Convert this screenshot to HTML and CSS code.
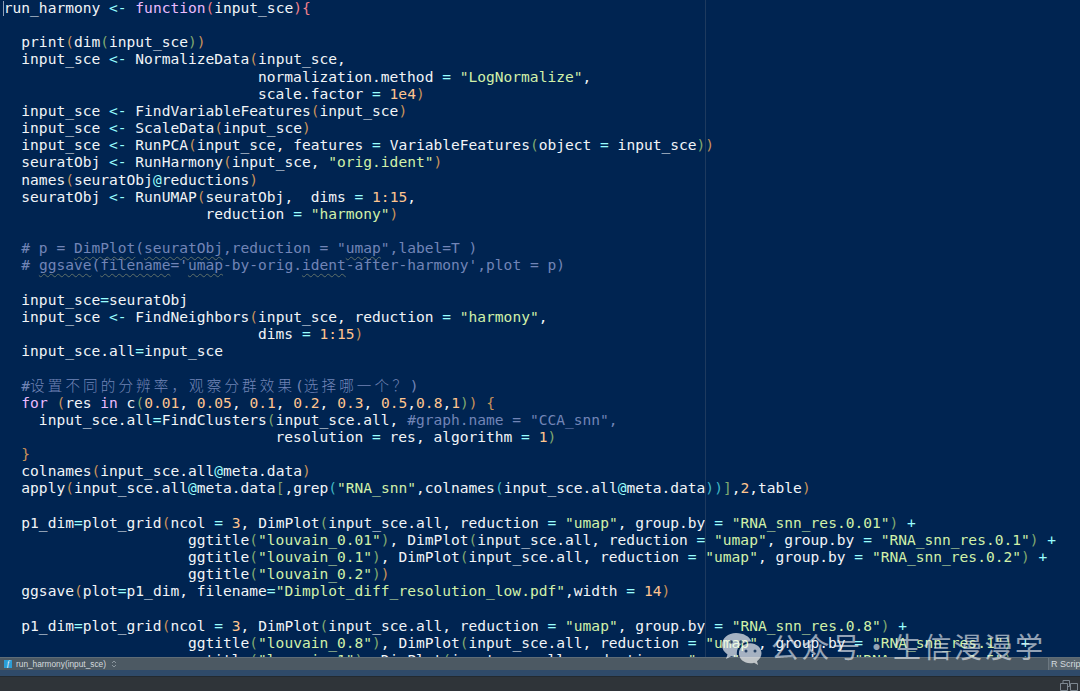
FILE: index.html
```html
<!DOCTYPE html>
<html lang="en">
<head>
<meta charset="utf-8">
<title>run_harmony</title>
<link rel="stylesheet" href="styles.css">
</head>
<body>
<div class="app">
<main class="editor">
<div class="code">
<div class="ln"><span class="caret"></span>run_harmony <i class="o">&lt;-</i> <i class="k">function</i><i class="r">(</i>input_sce<i class="r">){</i></div>
<div class="ln"> </div>
<div class="ln">  print<i class="p0">(</i>dim<i class="p1">(</i>input_sce<i class="p1">)</i><i class="p0">)</i></div>
<div class="ln">  input_sce <i class="o">&lt;-</i> NormalizeData<i class="p0">(</i>input_sce,</div>
<div class="ln">                             normalization.method <i class="o">=</i> <i class="s">"LogNormalize"</i>,</div>
<div class="ln">                             scale.factor <i class="o">=</i> <i class="n">1e4</i><i class="p0">)</i></div>
<div class="ln">  input_sce <i class="o">&lt;-</i> FindVariableFeatures<i class="p0">(</i>input_sce<i class="p0">)</i></div>
<div class="ln">  input_sce <i class="o">&lt;-</i> ScaleData<i class="p0">(</i>input_sce<i class="p0">)</i></div>
<div class="ln">  input_sce <i class="o">&lt;-</i> RunPCA<i class="p0">(</i>input_sce, features <i class="o">=</i> VariableFeatures<i class="p1">(</i>object <i class="o">=</i> input_sce<i class="p1">)</i><i class="p0">)</i></div>
<div class="ln">  seuratObj <i class="o">&lt;-</i> RunHarmony<i class="p0">(</i>input_sce, <i class="s">"orig.ident"</i><i class="p0">)</i></div>
<div class="ln">  names<i class="p0">(</i>seuratObj<i class="o">@</i>reductions<i class="p0">)</i></div>
<div class="ln">  seuratObj <i class="o">&lt;-</i> RunUMAP<i class="p0">(</i>seuratObj,  dims <i class="o">=</i> <i class="n">1:15</i>,</div>
<div class="ln">                       reduction <i class="o">=</i> <i class="s">"harmony"</i><i class="p0">)</i></div>
<div class="ln"> </div>
<div class="ln c">  # p = <u>DimPlot</u>(<u>seuratObj</u>,reduction = "<u>umap</u>",label=T )</div>
<div class="ln c">  # <u>ggsave</u>(<u>filename</u>='<u>umap</u>-by-orig.<u>ident</u>-after-harmony',plot = p)</div>
<div class="ln"> </div>
<div class="ln">  input_sce<i class="o">=</i>seuratObj</div>
<div class="ln">  input_sce <i class="o">&lt;-</i> FindNeighbors<i class="p0">(</i>input_sce, reduction <i class="o">=</i> <i class="s">"harmony"</i>,</div>
<div class="ln">                             dims <i class="o">=</i> <i class="n">1:15</i><i class="p0">)</i></div>
<div class="ln">  input_sce.all<i class="o">=</i>input_sce</div>
<div class="ln"> </div>
<div class="ln c">  #<span class="cjk">设置不同的分辨率，观察分群效果</span>(<span class="cjk">选择哪一个？</span>)</div>
<div class="ln">  <i class="k">for</i> <i class="p0">(</i>res <i class="k">in</i> c<i class="p1">(</i><i class="n">0.01</i>, <i class="n">0.05</i>, <i class="n">0.1</i>, <i class="n">0.2</i>, <i class="n">0.3</i>, <i class="n">0.5</i>,<i class="n">0.8</i>,<i class="n">1</i><i class="p1">)</i><i class="p0">)</i> <i class="p0">{</i></div>
<div class="ln">    input_sce.all<i class="o">=</i>FindClusters<i class="p1">(</i>input_sce.all, <i class="c">#graph.name = "CCA_snn",</i></div>
<div class="ln">                               resolution <i class="o">=</i> res, algorithm <i class="o">=</i> <i class="n">1</i><i class="p1">)</i></div>
<div class="ln">  <i class="p0">}</i></div>
<div class="ln">  colnames<i class="p0">(</i>input_sce.all<i class="o">@</i>meta.data<i class="p0">)</i></div>
<div class="ln">  apply<i class="p0">(</i>input_sce.all<i class="o">@</i>meta.data<i class="p1">[</i>,grep<i class="p2">(</i><i class="s">"RNA_snn"</i>,colnames<i class="p2">(</i>input_sce.all<i class="o">@</i>meta.data<i class="p2">)</i><i class="p2">)</i><i class="p1">]</i>,<i class="n">2</i>,table<i class="p0">)</i></div>
<div class="ln"> </div>
<div class="ln">  p1_dim<i class="o">=</i>plot_grid<i class="p0">(</i>ncol <i class="o">=</i> <i class="n">3</i>, DimPlot<i class="p1">(</i>input_sce.all, reduction <i class="o">=</i> <i class="s">"umap"</i>, group.by <i class="o">=</i> <i class="s">"RNA_snn_res.0.01"</i><i class="p1">)</i> <i class="o">+</i></div>
<div class="ln">                     ggtitle<i class="p1">(</i><i class="s">"louvain_0.01"</i><i class="p1">)</i>, DimPlot<i class="p1">(</i>input_sce.all, reduction <i class="o">=</i> <i class="s">"umap"</i>, group.by <i class="o">=</i> <i class="s">"RNA_snn_res.0.1"</i><i class="p1">)</i> <i class="o">+</i></div>
<div class="ln">                     ggtitle<i class="p1">(</i><i class="s">"louvain_0.1"</i><i class="p1">)</i>, DimPlot<i class="p1">(</i>input_sce.all, reduction <i class="o">=</i> <i class="s">"umap"</i>, group.by <i class="o">=</i> <i class="s">"RNA_snn_res.0.2"</i><i class="p1">)</i> <i class="o">+</i></div>
<div class="ln">                     ggtitle<i class="p1">(</i><i class="s">"louvain_0.2"</i><i class="p1">)</i><i class="p0">)</i></div>
<div class="ln">  ggsave<i class="p0">(</i>plot<i class="o">=</i>p1_dim, filename<i class="o">=</i><i class="s">"Dimplot_diff_resolution_low.pdf"</i>,width <i class="o">=</i> <i class="n">14</i><i class="p0">)</i></div>
<div class="ln"> </div>
<div class="ln">  p1_dim<i class="o">=</i>plot_grid<i class="p0">(</i>ncol <i class="o">=</i> <i class="n">3</i>, DimPlot<i class="p1">(</i>input_sce.all, reduction <i class="o">=</i> <i class="s">"umap"</i>, group.by <i class="o">=</i> <i class="s">"RNA_snn_res.0.8"</i><i class="p1">)</i> <i class="o">+</i></div>
<div class="ln">                     ggtitle<i class="p1">(</i><i class="s">"louvain_0.8"</i><i class="p1">)</i>, DimPlot<i class="p1">(</i>input_sce.all, reduction <i class="o">=</i> <i class="s">"umap"</i>, group.by <i class="o">=</i> <i class="s">"RNA_snn_res.1"</i><i class="p1">)</i> <i class="o">+</i></div>
<div class="ln">                     ggtitle<i class="p1">(</i><i class="s">"louvain_1"</i><i class="p1">)</i>, DimPlot<i class="p1">(</i>input_sce.all, reduction <i class="o">=</i> <i class="s">"umap"</i>, group.by <i class="o">=</i> <i class="s">"RNA_snn_res.1.5"</i><i class="p1">)</i> <i class="o">+</i></div>
</div>
<div class="margin-line"></div>
</main>
<footer class="status">
<span class="fn-icon">f</span>
<span class="fn-name">run_harmony(input_sce)</span>
<svg class="updown" viewBox="0 0 6 8" width="6" height="8"><path d="M1 3 3 1 5 3M1 5 3 7 5 5" fill="none" stroke="#8b969e" stroke-width="1"/></svg>
<span class="file-type">R Script</span>
</footer>
<div class="band"></div>
<div class="console-bar">
<svg class="win-icons" viewBox="0 0 18 11" width="18" height="11"><path d="M.5 3.5h7v7h-7zM3 3.500V.5h6.500v6H8M10.500 3.500h7v7h-7z" fill="none" stroke="#7d8790" stroke-width="1"/></svg>
</div>
<div class="watermark">
<svg class="wm-icon" viewBox="0 0 40 33" width="40" height="33">
<path d="M14 0C6 0 0 5.200 0 12c0 4 2.200 7.200 5.500 9.500L4 26l5.200-2.800c1.600.5 3.200.8 4.800.8h1.400c-.4-1.300-.6-2.500-.6-3.800C14.800 13.600 20.800 8.500 28.400 8.500h1C27.700 3.500 21.500 0 14 0Z" fill="#fff"/>
<path d="M39.500 20.300c0-5.700-5.300-10-11.200-10-6.300 0-11.400 4.300-11.400 10s5.100 10 11.400 10c1.300 0 2.600-.2 3.800-.6l4 2.300-1.100-3.700c2.700-2 4.500-4.800 4.500-8Z" fill="#fff"/>
<circle cx="9" cy="9" r="1.800" fill="#39506e"/><circle cx="19" cy="9" r="1.800" fill="#39506e"/>
<circle cx="24" cy="18" r="1.500" fill="#39506e"/><circle cx="33" cy="18" r="1.500" fill="#39506e"/>
</svg>
<span class="wm-text">公众号・生信漫漫学</span>
</div>
</div>
</body>
</html>
```
FILE: styles.css
```css
html, body {
  margin: 0;
  padding: 0;
  height: 100%;
  overflow: hidden;
}

.app {
  position: relative;
  display: flex;
  flex-direction: column;
  width: 1080px;
  height: 691px;
  overflow: hidden;
  background: #2f3439;
}

.editor {
  position: relative;
  flex: 0 0 657px;
  overflow: hidden;
  background: #002451;
}

.code {
  margin-top: -1px;
  padding-left: 3.800px;
  font-family: "DejaVu Sans Mono", "Noto Sans CJK SC", monospace;
  font-size: 14.570px;
  line-height: 17.170px;
  color: #f2f5f8;
}

.ln {
  height: 17.170px;
  white-space: pre;
}

.code i {
  font-style: normal;
}

.code .o { color: #99ffff; }
.code .k { color: #ebbbff; }
.code .r { color: #f0808a; }
.code .s { color: #d1f1a9; }
.code .n { color: #ffc58f; }
.code .c, .ln.c { color: #7285b7; }
.code .p0 { color: #c8925a; }
.code .p1 { color: #7fa870; }
.code .p2 { color: #3fb7c4; }

.ln u {
  text-decoration: underline wavy #5f7068 1px;
  text-underline-offset: 3px;
}

.cjk {
  font-family: "Noto Sans CJK SC", sans-serif;
  font-weight: 300;
  letter-spacing: 3.100px;
}

.caret {
  display: inline-block;
  width: 1px;
  height: 15px;
  margin: 0 -1px 0 0;
  vertical-align: -3px;
  background: #8fa0b8;
  transform: translateX(-1px);
}

.margin-line {
  position: absolute;
  top: 0;
  bottom: 0;
  left: 705px;
  width: 1px;
  background: #1e3a5e;
}

.status {
  display: flex;
  align-items: center;
  flex: 0 0 13px;
  box-sizing: border-box;
  padding-left: 4px;
  border-top: 1px solid #5f6c76;
  background: #4c5963;
  color: #d4dade;
  font-family: "Liberation Sans", sans-serif;
  font-size: 8.300px;
}

.fn-icon {
  flex: 0 0 8px;
  height: 8px;
  background: #2b9dd6;
  color: #fff;
  font-family: "Liberation Serif", serif;
  font-size: 8px;
  font-style: italic;
  line-height: 8px;
  text-align: center;
}

.fn-name {
  margin-left: 4px;
  white-space: nowrap;
}

.updown {
  margin-left: 5px;
}

.file-type {
  align-self: stretch;
  margin-left: auto;
  padding-left: 2px;
  width: 29px;
  border-left: 1px solid #6b7780;
  background: #59656e;
  font-size: 9px;
  line-height: 12px;
  white-space: nowrap;
  overflow: hidden;
}

.band {
  flex: 0 0 6px;
  background: #2f4a69;
}

.console-bar {
  display: flex;
  flex: 1;
  justify-content: flex-end;
  align-items: flex-end;
  padding-right: 2px;
  background: #2f3439;
  border-top: 1px solid #232a30;
}

.win-icons {
  display: block;
}

.watermark {
  position: absolute;
  top: 630px;
  left: 722px;
  display: flex;
  align-items: center;
  opacity: 0.65;
  pointer-events: none;
}

.wm-icon {
  display: block;
}

.wm-text {
  margin-bottom: 6px;
  margin-left: 9px;
  color: #e4e8ec;
  font-family: "Noto Sans CJK SC", sans-serif;
  font-size: 28px;
  font-weight: 400;
  letter-spacing: 2.500px;
  line-height: 33px;
  white-space: nowrap;
}
```
